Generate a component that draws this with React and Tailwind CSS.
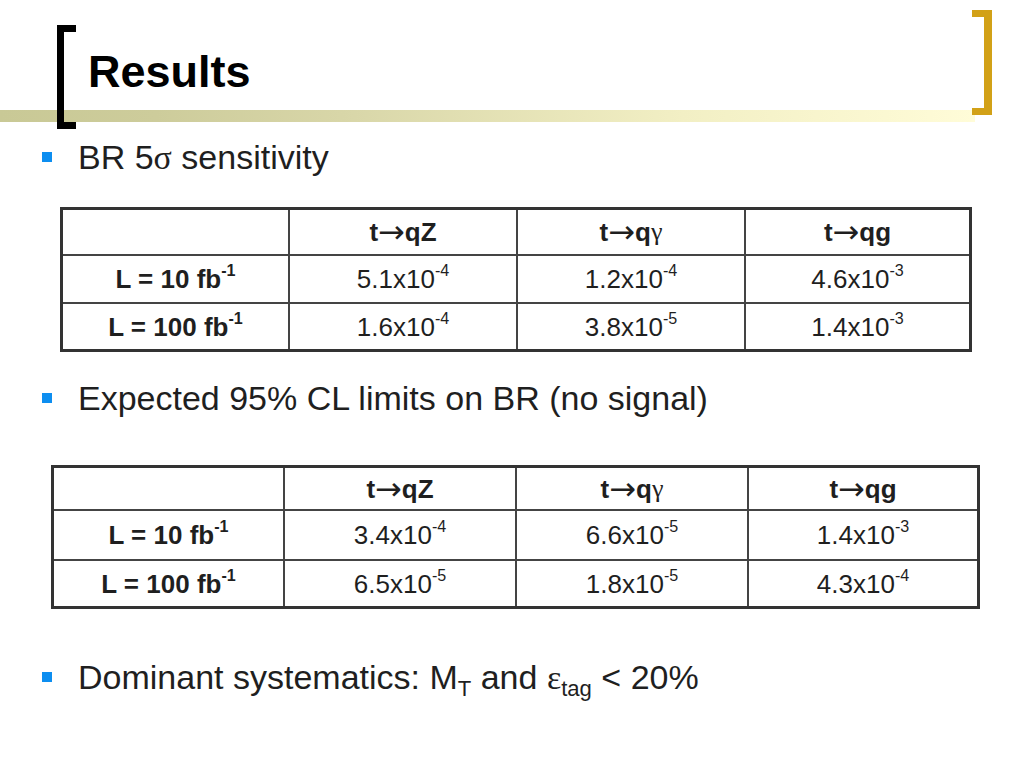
const SANS = "font-['Liberation_Sans',Arial,sans-serif]";

const T1 = {
  grid: "grid-cols-[225px_228px_228px_225px] grid-rows-[44px_48px_47px]",
  data: [
    ["5.1x10", "-4", "1.2x10", "-4", "4.6x10", "-3"],
    ["1.6x10", "-4", "3.8x10", "-5", "1.4x10", "-3"],
  ],
};

const T2 = {
  grid: "grid-cols-[229px_232px_232px_230px] grid-rows-[41px_50px_47px]",
  data: [
    ["3.4x10", "-4", "6.6x10", "-5", "1.4x10", "-3"],
    ["6.5x10", "-5", "1.8x10", "-5", "4.3x10", "-4"],
  ],
};

const Greek = ({ children }) => (
  <span className="font-['Liberation_Serif','DejaVu_Serif',serif] font-normal">{children}</span>
);

const Arrow = () => (
  <span className="font-['DejaVu_Sans',sans-serif] font-normal text-[32px] leading-none">→</span>
);

const Sup = ({ children }) => (
  <sup className="text-[62%] relative -top-[0.55em] align-baseline">{children}</sup>
);

const Sub = ({ children }) => (
  <sub className="text-[65%] relative top-[0.35em] align-baseline">{children}</sub>
);

function Bullet({ children, className }) {
  return (
    <div className={"flex items-center h-[34px] " + className}>
      <div className="w-[10px] h-[10px] bg-[#0d8ef0] ml-[42px] mr-[26px]" />
      <div className="text-[34px] leading-none text-[#1f1f1f] whitespace-nowrap">{children}</div>
    </div>
  );
}

function Cell({ r, c, bold, children }) {
  let cls = "flex items-center justify-center leading-none whitespace-nowrap border-[#444]";
  if (r > 0) cls += " border-t-2";
  if (c > 0) cls += " border-l-2";
  if (bold) cls += " font-bold";
  return <div className={cls}>{children}</div>;
}

function ResultTable({ spec, className }) {
  const heads = [
    <>t<Arrow />qZ</>,
    <>t<Arrow />q<Greek>γ</Greek></>,
    <>t<Arrow />qg</>,
  ];
  const labels = ["10", "100"];
  return (
    <div className={"grid w-fit border-[3px] border-[#333] text-[26px] text-[#1f1f1f] " + spec.grid + " " + className}>
      <Cell r={0} c={0} />
      {heads.map((h, i) => (
        <Cell key={i} r={0} c={i + 1} bold>{h}</Cell>
      ))}
      {spec.data.map((row, r) => (
        <div key={r} className="contents">
          <Cell r={r + 1} c={0} bold>
            L = {labels[r]} fb<Sup>-1</Sup>
          </Cell>
          {[0, 2, 4].map((k, i) => (
            <Cell key={k} r={r + 1} c={i + 1}>
              {row[k]}<Sup>{row[k + 1]}</Sup>
            </Cell>
          ))}
        </div>
      ))}
    </div>
  );
}

export default function App() {
  return (
    <div className={"w-[1024px] h-[768px] bg-white relative overflow-hidden " + SANS}>
      {/* header */}
      <div className="relative h-[122px]">
        <div className="pt-[49px] pl-[88px] text-[45px] leading-none font-bold text-black">Results</div>
        <div className="mt-[16px] h-[12px] w-[975px] bg-[linear-gradient(to_right,#c9c996_0%,#cdcc9b_16%,#d8d6a8_35%,#f2efc4_70%,#fffcd8_100%)]" />
        {/* left bracket */}
        <div className="absolute left-[57px] top-[25px] w-[19px] h-[104px] border-l-[7px] border-t-[7px] border-b-[7px] border-black" />
        {/* right bracket */}
        <div className="absolute left-[972px] top-[10px] w-[20px] h-[105px] border-r-[8px] border-t-[7px] border-b-[7px] border-[#d2a117]" />
      </div>

      <Bullet className="mt-[18px]">
        BR 5<Greek>σ</Greek> sensitivity
      </Bullet>

      <ResultTable spec={T1} className="mt-[33px] ml-[60px]" />

      <Bullet className="mt-[29px]">Expected 95% CL limits on BR (no signal)</Bullet>

      <ResultTable spec={T2} className="mt-[50px] ml-[51px]" />

      <Bullet className="mt-[51px]">
        Dominant systematics: M<Sub>T</Sub> and <Greek>ε</Greek><Sub>tag</Sub> &lt; 20%
      </Bullet>
    </div>
  );
}
